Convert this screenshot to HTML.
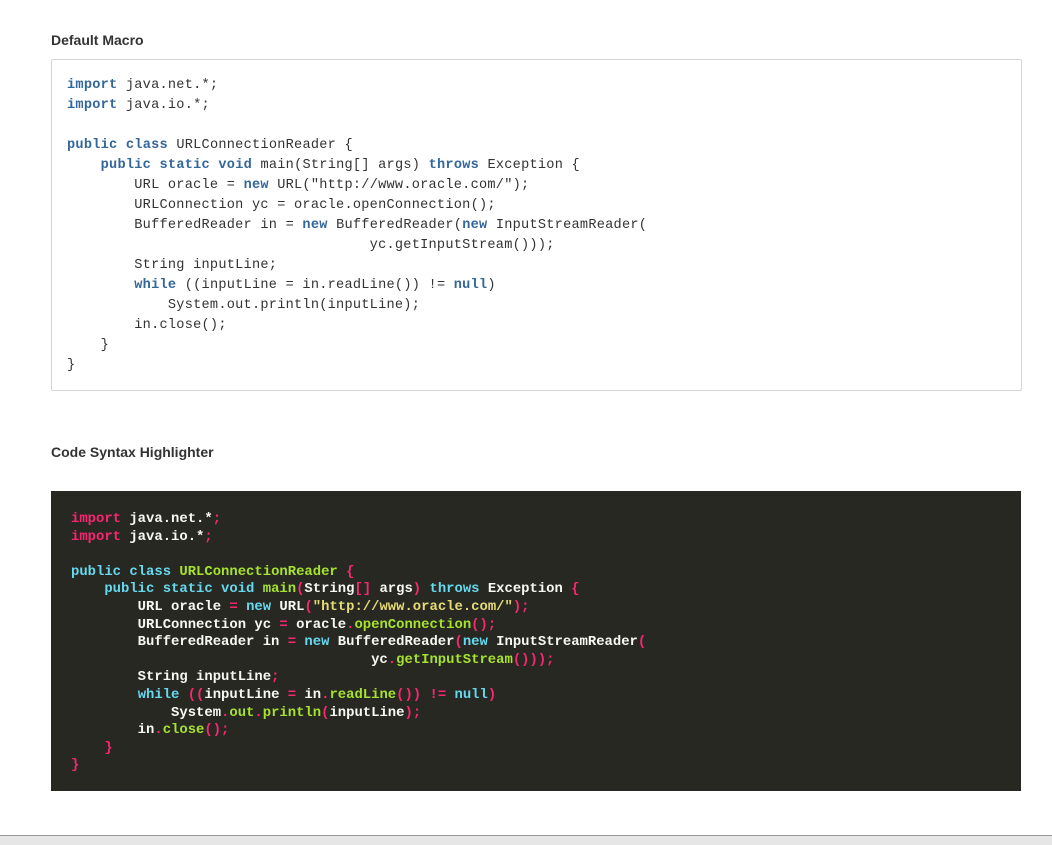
<!DOCTYPE html>
<html><head><style>
body{margin:0;width:1052px;height:844px;background:#fff;position:relative;overflow:hidden;font-family:"Liberation Sans",sans-serif;}
h3{position:absolute;left:51px;margin:0;font-size:14px;font-weight:bold;color:#333;}
.box1{position:absolute;left:51px;top:59px;width:969px;height:330px;border:1px solid #d5d5d5;border-radius:2px;}
.box1 pre{position:absolute;left:15px;top:16px;margin:0;font-family:"Liberation Mono",monospace;font-size:13.6px;line-height:20px;color:#333;letter-spacing:0.25px;}
.box1 b{color:#336699;}
.box2{position:absolute;left:51px;top:491px;width:970px;height:300px;background:#272822;}
.box2 pre{position:absolute;left:20px;top:20px;margin:0;font-family:"Liberation Mono",monospace;font-size:13.9px;line-height:17.6px;color:#f8f8f2;font-weight:bold;}
.k{color:#f92672}.b{color:#66d9ef}.g{color:#a6e22e}.s{color:#e6db74}
.bar{position:absolute;left:0;top:835px;width:1052px;height:9px;background:#e6e6e6;border-top:1px solid #999;}
</style></head><body>
<h3 style="top:32px">Default Macro</h3>
<div class="box1"><pre><b>import</b> java.net.*;
<b>import</b> java.io.*;

<b>public</b> <b>class</b> URLConnectionReader {
    <b>public</b> <b>static</b> <b>void</b> main(String[] args) <b>throws</b> Exception {
        URL oracle = <b>new</b> URL("http://www.oracle.com/");
        URLConnection yc = oracle.openConnection();
        BufferedReader in = <b>new</b> BufferedReader(<b>new</b> InputStreamReader(
                                    yc.getInputStream()));
        String inputLine;
        <b>while</b> ((inputLine = in.readLine()) != <b>null</b>)
            System.out.println(inputLine);
        in.close();
    }
}</pre></div>
<h3 style="top:444px">Code Syntax Highlighter</h3>
<div class="box2"><pre><span class="k">import</span> java.net.*<span class="k">;</span>
<span class="k">import</span> java.io.*<span class="k">;</span>

<span class="b">public class</span> <span class="g">URLConnectionReader</span> <span class="k">{</span>
    <span class="b">public static void</span> <span class="g">main</span><span class="k">(</span>String<span class="k">[]</span> args<span class="k">)</span> <span class="b">throws</span> Exception <span class="k">{</span>
        URL oracle <span class="k">=</span> <span class="b">new</span> URL<span class="k">(</span><span class="s">"http://www.oracle.com/"</span><span class="k">);</span>
        URLConnection yc <span class="k">=</span> oracle<span class="k">.</span><span class="g">openConnection</span><span class="k">();</span>
        BufferedReader in <span class="k">=</span> <span class="b">new</span> BufferedReader<span class="k">(</span><span class="b">new</span> InputStreamReader<span class="k">(</span>
                                    yc<span class="k">.</span><span class="g">getInputStream</span><span class="k">()));</span>
        String inputLine<span class="k">;</span>
        <span class="b">while</span> <span class="k">((</span>inputLine <span class="k">=</span> in<span class="k">.</span><span class="g">readLine</span><span class="k">())</span> <span class="k">!=</span> <span class="b">null</span><span class="k">)</span>
            System<span class="k">.</span><span class="g">out</span><span class="k">.</span><span class="g">println</span><span class="k">(</span>inputLine<span class="k">);</span>
        in<span class="k">.</span><span class="g">close</span><span class="k">();</span>
    <span class="k">}</span>
<span class="k">}</span></pre></div>
<div class="bar"></div>
</body></html>
